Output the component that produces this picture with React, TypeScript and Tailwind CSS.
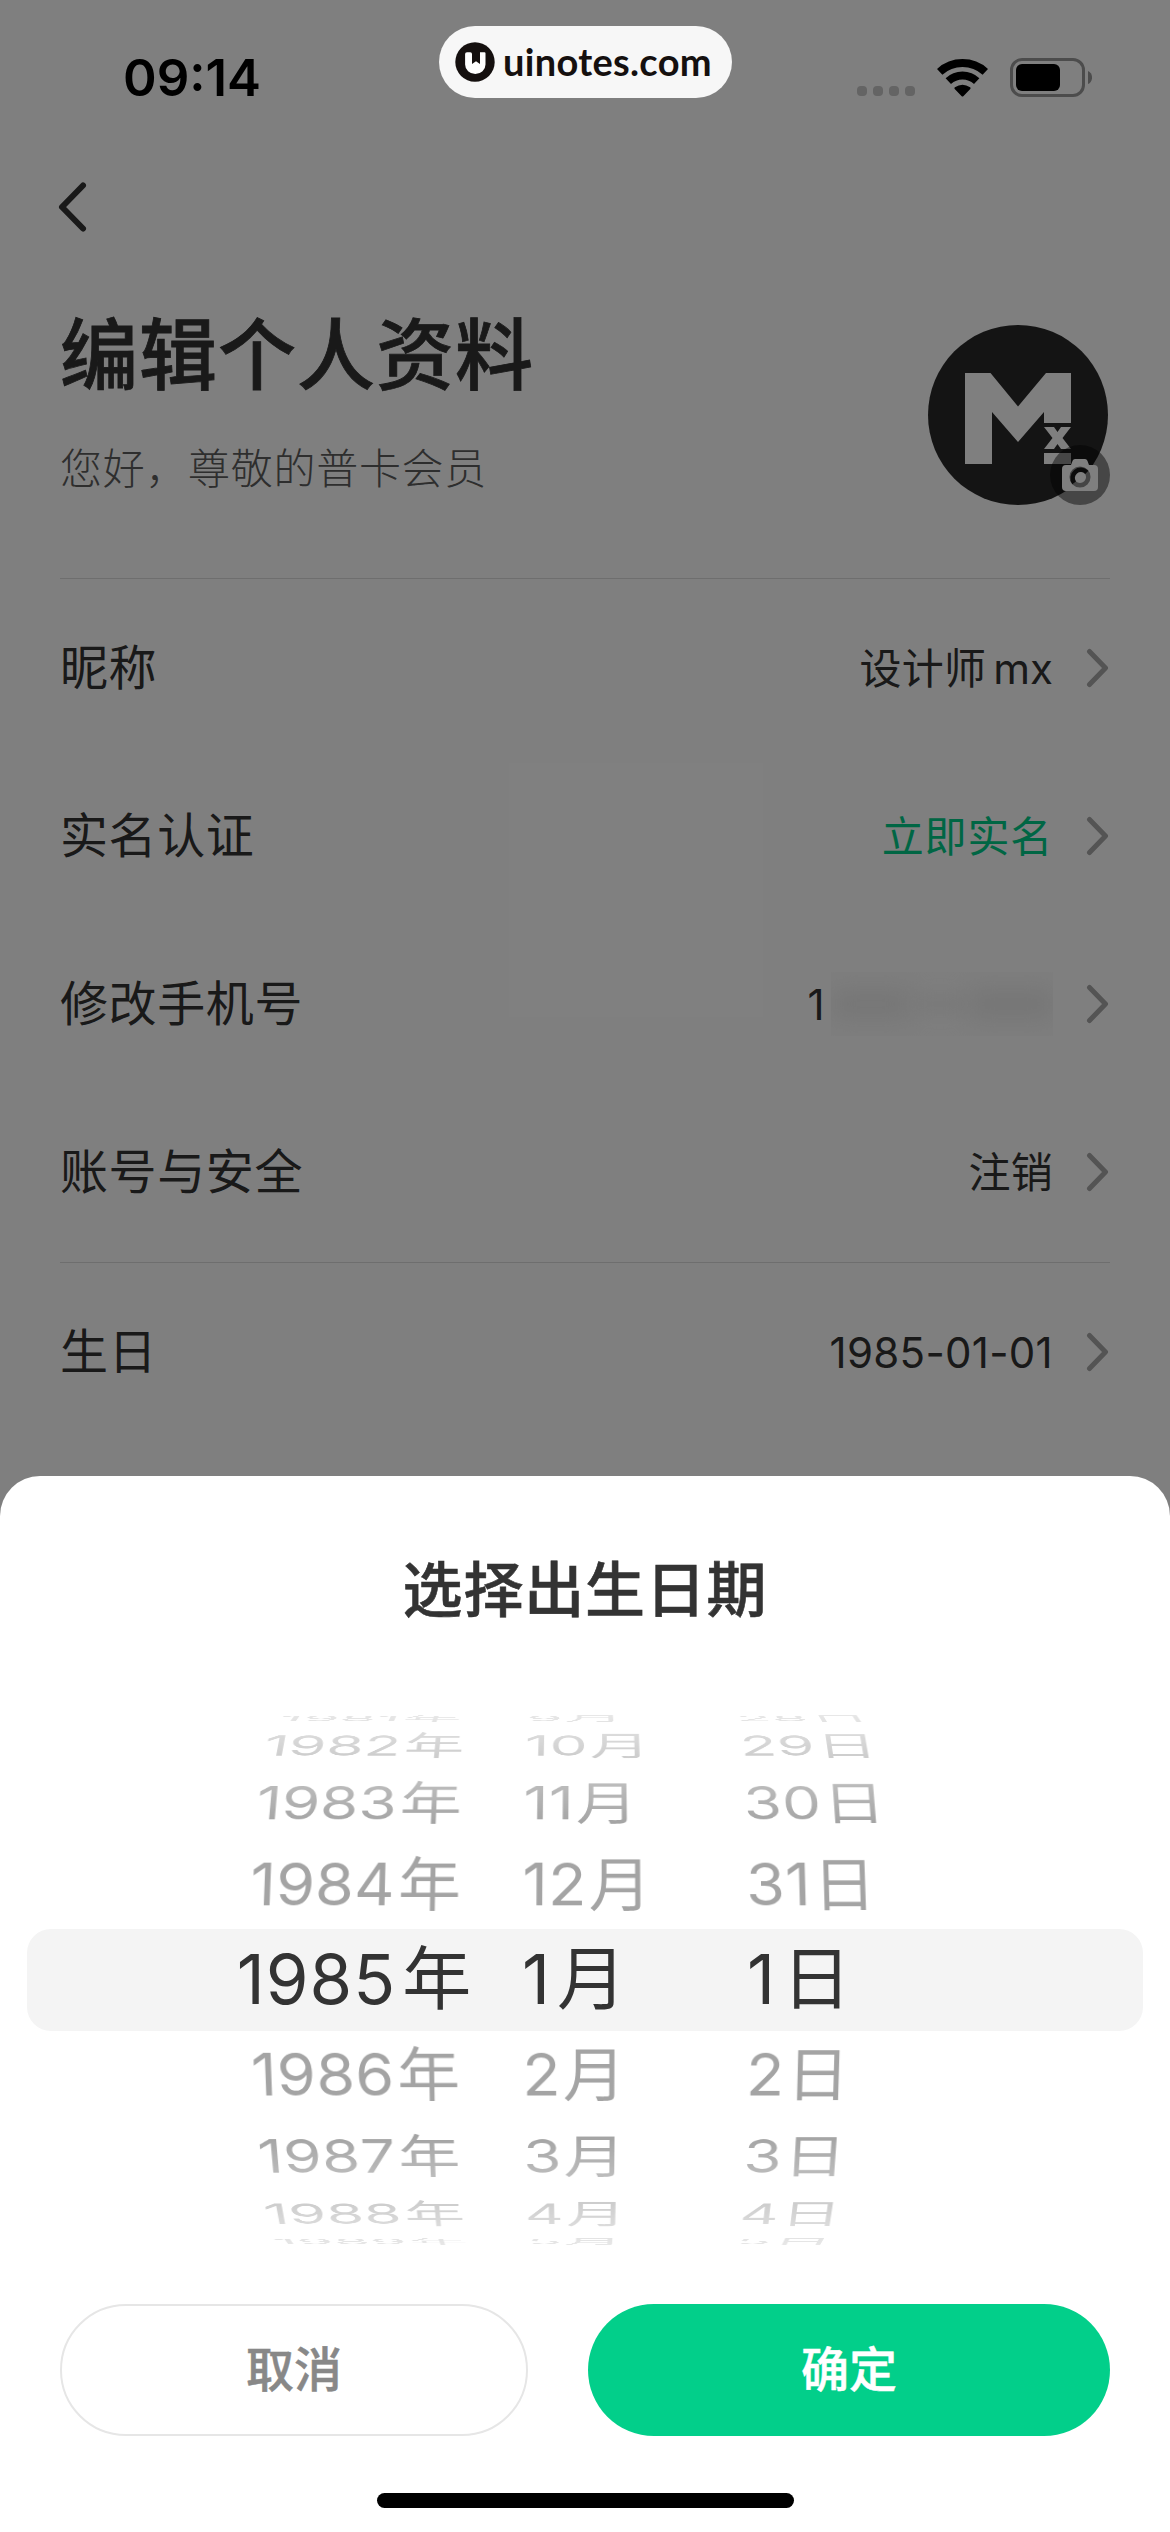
import type { ReactNode } from 'react'

const TILT = 19.4
const RADIUS = 288

interface WheelRow {
  year: number
  month: number
  day: number
}

const rows: WheelRow[] = [
  { year: 1981, month: 9, day: 28 },
  { year: 1982, month: 10, day: 29 },
  { year: 1983, month: 11, day: 30 },
  { year: 1984, month: 12, day: 31 },
  { year: 1985, month: 1, day: 1 },
  { year: 1986, month: 2, day: 2 },
  { year: 1987, month: 3, day: 3 },
  { year: 1988, month: 4, day: 4 },
  { year: 1989, month: 5, day: 5 },
]

const selectedIndex = 4

function StatusBar() {
  return (
    <div className="flex h-[156px] items-start justify-between pl-[123px] pr-[78px] text-black">
      <span className="mt-[46px] text-[51px] font-semibold leading-[64px]">09:14</span>
      <div className="mt-[58px] flex items-start">
        <div className="mr-[22px] mt-7 flex gap-[6px]">
          <span className="size-[10px] rounded-[4px] bg-[#c8c8c8]" />
          <span className="size-[10px] rounded-[4px] bg-[#c8c8c8]" />
          <span className="size-[10px] rounded-[4px] bg-[#c8c8c8]" />
          <span className="size-[10px] rounded-[4px] bg-[#c8c8c8]" />
        </div>
        <svg width="51" height="38" viewBox="0 0 51 38" className="mr-[22px] mt-px" fill="none">
          <path d="M2.700 12.900a34 34 0 0 1 45.600 0" stroke="#000" strokeWidth="8" />
          <path d="M11.300 22.200a20.600 20.600 0 0 1 28.400 0" stroke="#000" strokeWidth="7.800" />
          <path d="M24.700 37.200l-7-7.200q-.8-.9.2-1.700 7.600-5 15.200 0 1 .8.2 1.700l-7 7.200q-.8.700-1.600 0z" fill="#000" />
        </svg>
        <svg width="82" height="39" viewBox="0 0 82 39">
          <rect x="1.5" y="1.5" width="72" height="36" rx="10.5" fill="none" stroke="#999" strokeWidth="3" />
          <rect x="6" y="6" width="44" height="27" rx="6" fill="#000" />
          <path d="M78 13c5.400 2 5.400 11 0 13z" fill="#999" />
        </svg>
      </div>
    </div>
  )
}

function Brand() {
  return (
    <div className="absolute left-[439px] top-[26px] flex h-[72px] w-[293px] items-center rounded-full bg-[#f7f7f7] pl-4 text-[#15100f]">
      <svg width="40" height="40" viewBox="0 0 40 40" className="mr-[8px]">
        <circle cx="20" cy="20" r="19.700" fill="#15100f" />
        <path
          d="M12 10.300h3.300q1.700 0 1.700 1.700v10l4-2.800 4 2.800V10.300h4.500q1 0 1 1v11.200a10.200 9.500 0 0 1-20.400 0V12q0-1.700 1.900-1.700z"
          fill="#fff"
        />
      </svg>
      <span className="mb-[3px] font-[Lato,sans-serif] text-[38px] font-bold leading-none tracking-[0.3px]">uinotes.com</span>
    </div>
  )
}

function Avatar() {
  return (
    <div className="relative mt-[43px] size-[182px]">
      <svg width="182" height="182" viewBox="0 0 182 182">
        <circle cx="90" cy="90" r="90" fill="#292929" />
        <path d="M37 48h25.500L90 81.500 118 48h25v50h-27V87l-26 30-26-30v52H37z" fill="#fff" />
        <path d="M116 102h10l3.500 5 3.500-5h10l-8.500 11 8.500 11h-10l-3.500-5-3.500 5h-10l8.500-11zM116 128h27v11h-27z" fill="#fff" />
      </svg>
      <div className="absolute bottom-[2px] right-0 flex size-[60px] items-center justify-center rounded-full bg-black/45">
        <svg width="36" height="32" viewBox="0 0 36 32">
          <path
            d="M4 6h5l1.600-4.200Q11.200 0 13 0h10q1.800 0 2.400 1.800L27 6h5q4 0 4 4v18q0 4-4 4H4q-4 0-4-4V10q0-4 4-4z"
            fill="#fff"
          />
          <circle cx="18" cy="18" r="8.300" fill="none" stroke="#8a8a8a" strokeWidth="4.500" />
          <path d="M12.100 23.900a8.300 8.300 0 0 1 12.700-10.600" fill="none" stroke="#161616" strokeWidth="4.500" />
        </svg>
      </div>
    </div>
  )
}

function Chevron() {
  return (
    <svg width="24" height="40" viewBox="0 0 24 40" fill="none" className="ml-[33px]">
      <path d="M3.500 3.500L19.500 20 3.500 36.500" stroke="#a8a8a8" strokeWidth="5" strokeLinecap="round" strokeLinejoin="round" />
    </svg>
  )
}

function Row({ label, children }: { label: string; children: ReactNode }) {
  return (
    <div className="flex h-[168px] items-center">
      <span className="flex-1 text-[48px] tracking-[0.6px]">{label}</span>
      <span className="flex items-center text-[42px] tracking-[0.3px]">{children}</span>
      <Chevron />
    </div>
  )
}

function ProfilePage() {
  return (
    <main className="text-[#333]">
      <StatusBar />
      <div className="flex h-[126px] items-start px-[57px] pt-6">
        <svg width="32" height="54" viewBox="0 0 32 54" fill="none">
          <path d="M26 5.500L5 27l21 21.500" stroke="#333" strokeWidth="6" strokeLinecap="round" strokeLinejoin="round" />
        </svg>
      </div>
      <div className="mx-[60px]">
        <header className="flex h-[297px] justify-between border-b border-[#dcdcdc]">
          <div className="pt-[22px]">
            <h1 className="text-[78px] font-medium leading-[104px] tracking-[1px] [-webkit-text-stroke:0.8px]">编辑个人资料</h1>
            <p className="mt-[29px] text-[42px] font-light leading-[64px] tracking-[0.7px] text-[#5c5c5c]">您好，尊敬的普卡会员</p>
          </div>
          <Avatar />
        </header>
        <section className="h-[684px] border-b border-[#dcdcdc] pt-[5px]">
          <Row label="昵称">
            设计师<span className="ml-[7px] tracking-normal">mx</span>
          </Row>
          <Row label="实名认证">
            <span className="tracking-[0.8px] text-[#00cc88]">立即实名</span>
          </Row>
          <Row label="修改手机号">
            1
            <span className="ml-1.5 flex h-16 w-[222px] items-center justify-between overflow-hidden bg-[#fcfcfc]">
              <span className="h-7 w-[80px] bg-[#ebebeb] blur-[12px]" />
              <span className="h-4 w-[50px] bg-[#f2f2f2] blur-[8px]" />
              <span className="h-7 w-[84px] bg-[#eaeaea] blur-[12px]" />
            </span>
          </Row>
          <Row label="账号与安全">注销</Row>
        </section>
        <section className="pt-[5px]">
          <Row label="生日">1985-01-01</Row>
        </section>
      </div>
    </main>
  )
}

function DateWheel() {
  return (
    <div className="px-[27px]">
      <div className="grid h-[534px] items-center">
        <div className="col-start-1 row-start-1 h-[102px] rounded-[24px] bg-[#f4f4f4]" />
        <div className="col-start-1 row-start-1 grid h-[534px] items-center overflow-hidden mask-[linear-gradient(to_bottom,rgb(0_0_0/0.25),#000_110px,#000_424px,rgb(0_0_0/0.25))] perspective-[3000px]">
          {rows.map((row, i) => {
            const selected = i === selectedIndex
            const angle = (selectedIndex - i) * TILT
            return (
              <div
                key={row.year}
                className={`col-start-1 row-start-1 grid h-[90px] grid-cols-[495px_225px_1fr] items-center pb-[2px] leading-none ${
                  selected ? 'text-[69px] tracking-[1px] text-[#333]' : 'text-[63px] tracking-[0.3px] text-[#a4a4a4]'
                }`}
                style={{ transform: `translateZ(${-RADIUS}px) rotateX(${angle}deg) translateZ(${RADIUS}px)` }}
              >
                <span className="pl-[160px] text-center">
                  {row.year}
                  <span className={selected ? 'ml-1.5' : 'ml-[3px]'}>年</span>
                </span>
                <span>
                  {row.month}
                  <span className={selected ? 'ml-1.5' : 'ml-[2px]'}>月</span>
                </span>
                <span>
                  {row.day}
                  <span className={selected ? 'ml-1.5' : 'ml-[2px]'}>日</span>
                </span>
              </div>
            )
          })}
        </div>
      </div>
    </div>
  )
}

function BirthdaySheet() {
  return (
    <div
      role="dialog"
      aria-label="选择出生日期"
      className="absolute inset-x-0 bottom-0 flex h-[1056px] flex-col rounded-t-[40px] bg-white text-[#333]"
    >
      <h2 className="mb-[78px] mt-[69px] text-center text-[60px] font-medium leading-[90px] tracking-[0.8px] [-webkit-text-stroke:0.6px]">
        选择出生日期
      </h2>
      <DateWheel />
      <div className="mt-[57px] flex gap-[60px] px-[60px] text-[48px] font-medium">
        <button className="h-[132px] w-[468px] rounded-full border-2 border-[#e6e6e6] text-[#888] [-webkit-text-stroke:0.5px]">
          取消
        </button>
        <button className="h-[132px] flex-1 rounded-full bg-[#02cf8a] text-white [-webkit-text-stroke:0.5px]">
          确定
        </button>
      </div>
      <div className="mx-auto mt-[57px] h-[15px] w-[417px] rounded-full bg-black" />
    </div>
  )
}

export default function App() {
  return (
    <div className="relative h-[2532px] w-[1170px] overflow-hidden bg-white font-[Inter,'Noto_Sans_CJK_SC',sans-serif]">
      <ProfilePage />
      <div className="absolute inset-0 bg-black/50" />
      <BirthdaySheet />
      <Brand />
    </div>
  )
}
